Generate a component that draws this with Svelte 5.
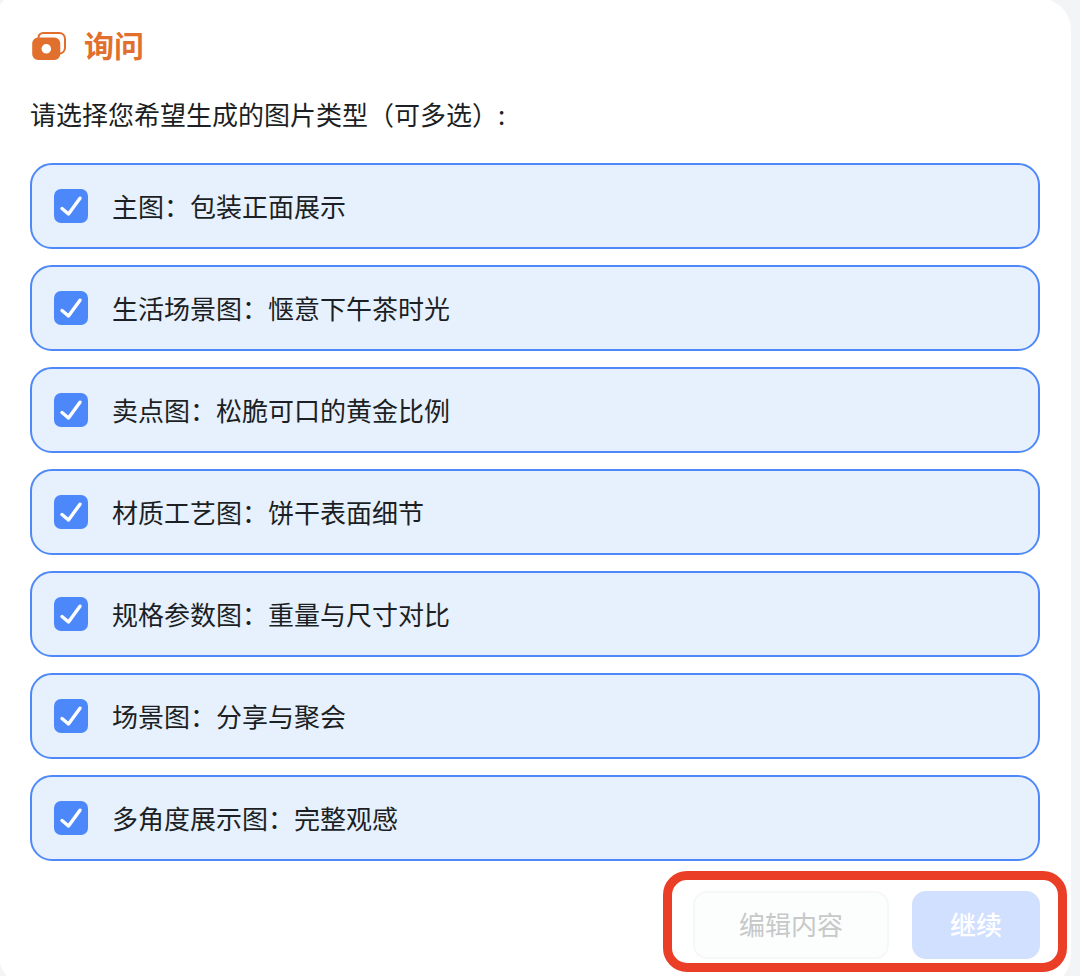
<script>
  /** Ask card: multi-select of the image types to generate. */

  const options = [
    { value: 'main', label: '主图：包装正面展示' },
    { value: 'lifestyle', label: '生活场景图：惬意下午茶时光' },
    { value: 'selling-point', label: '卖点图：松脆可口的黄金比例' },
    { value: 'material', label: '材质工艺图：饼干表面细节' },
    { value: 'spec', label: '规格参数图：重量与尺寸对比' },
    { value: 'scene', label: '场景图：分享与聚会' },
    { value: 'angles', label: '多角度展示图：完整观感' },
  ]

  let selected = $state(options.map((o) => o.value))
</script>

<main class="page">
  <section class="card">
    <header class="card__header">
      <svg class="card__icon" viewBox="0 0 36 32" aria-hidden="true">
        <path
          d="M8.500 10V9.500a4.500 4.500 0 0 1 4.500-4.500H29.500a5.500 5.500 0 0 1 5.500 5.500V20a5.500 5.500 0 0 1-5.500 5.500H29"
          fill="none"
          stroke="currentColor"
          stroke-width="2"
        />
        <path
          d="M8 9.500H24.500a5.800 5.800 0 0 1 5.800 5.800V26.200a5.800 5.800 0 0 1-5.800 5.800H8a5.800 5.800 0 0 1-5.800-5.800V15.300A5.800 5.800 0 0 1 8 9.500ZM16.300 16a4.800 4.800 0 1 0 0 9.600a4.800 4.800 0 1 0 0-9.600Z"
          fill="currentColor"
          fill-rule="evenodd"
        />
      </svg>
      <h1 class="card__title">询问</h1>
    </header>

    <fieldset class="options">
      <legend class="options__legend">请选择您希望生成的图片类型（可多选）:</legend>
      <div class="options__list">
        {#each options as option (option.value)}
          <label class="option" class:option--active={selected.includes(option.value)}>
            <span class="option__check">
              <input class="option__input" type="checkbox" value={option.value} bind:group={selected} />
              <svg class="option__mark" viewBox="0 0 34 34" aria-hidden="true">
                <path d="M8 19.500L14.500 25L26 9.200" />
              </svg>
            </span>
            <span>{option.label}</span>
          </label>
        {/each}
      </div>
    </fieldset>

    <div class="actions">
      <button class="button button--plain" type="button" disabled>编辑内容</button>
      <button class="button button--primary" type="button" disabled>继续</button>
    </div>
  </section>
</main>

<style>
  :global(body) {
    background: #f3f4f6;
  }

  .page {
    box-sizing: border-box;
    height: 100vh;
    overflow: hidden;
    font-family: 'Noto Sans CJK SC', sans-serif;
    font-size: 26px;
    line-height: 40px;
    color: #1c1f23;
  }

  .card {
    margin: -2px 9px 0 -1px;
    padding: 26px 31px 28px;
    border-radius: 12px 32px 32px 32px;
    background: #fff;
  }

  .card__header {
    display: flex;
    align-items: center;
    gap: 18px;
    color: #e1702f;
  }

  .card__icon {
    width: 36px;
    height: 32px;
  }

  .card__title {
    margin: 0;
    font-size: 30px;
    line-height: 40px;
    font-weight: 700;
  }

  .options {
    min-width: 0;
    margin: 30px 0 0;
    padding: 0;
    border: 0;
  }

  .options__legend {
    padding: 0;
  }

  .options__list {
    display: flex;
    flex-direction: column;
    gap: 16px;
    margin-top: 29px;
  }

  .option {
    display: flex;
    align-items: center;
    gap: 24px;
    padding: 21px 22px;
    border: 2px solid #e1e4e8;
    border-radius: 22px;
    background: #fff;
    cursor: pointer;
  }

  .option--active {
    border-color: #4f88f8;
    background: #e7f1fe;
  }

  .option__check {
    display: grid;
    width: 34px;
    height: 34px;
  }

  .option__input,
  .option__mark {
    grid-area: 1 / 1;
    width: 34px;
    height: 34px;
  }

  .option__input {
    box-sizing: border-box;
    margin: 0;
    border: 2px solid #c3c8d0;
    border-radius: 7px;
    background: #fff;
    appearance: none;
    cursor: pointer;
  }

  .option__input:checked {
    border-color: #4d88fa;
    background: #4d88fa;
  }

  .option__input:focus-visible {
    outline: 2px solid #4d88fa;
    outline-offset: 2px;
  }

  .option__mark {
    fill: none;
    stroke: #fff;
    stroke-width: 3.4;
    stroke-linecap: round;
    stroke-linejoin: round;
    pointer-events: none;
  }

  .actions {
    position: relative;
    display: flex;
    gap: 23px;
    width: fit-content;
    margin: 30px 0 0 auto;
  }

  /* Highlight frame around the two buttons */
  .actions::after {
    content: '';
    position: absolute;
    inset: -20px -27px -13px -30px;
    border: 9px solid #ea3f26;
    border-radius: 24px;
    pointer-events: none;
  }

  .button {
    padding: 11px 36px 13px;
    border: 2px solid transparent;
    border-radius: 14px;
    font: inherit;
  }

  .button--plain {
    padding: 11px 44px 13px;
    border-color: #f6f8f8;
    background: #fcfefe;
    color: #c7c9c9;
  }

  .button--primary {
    border-color: #d2e0ff;
    background: #d2e0ff;
    color: #fff;
    font-weight: 500;
  }
</style>
